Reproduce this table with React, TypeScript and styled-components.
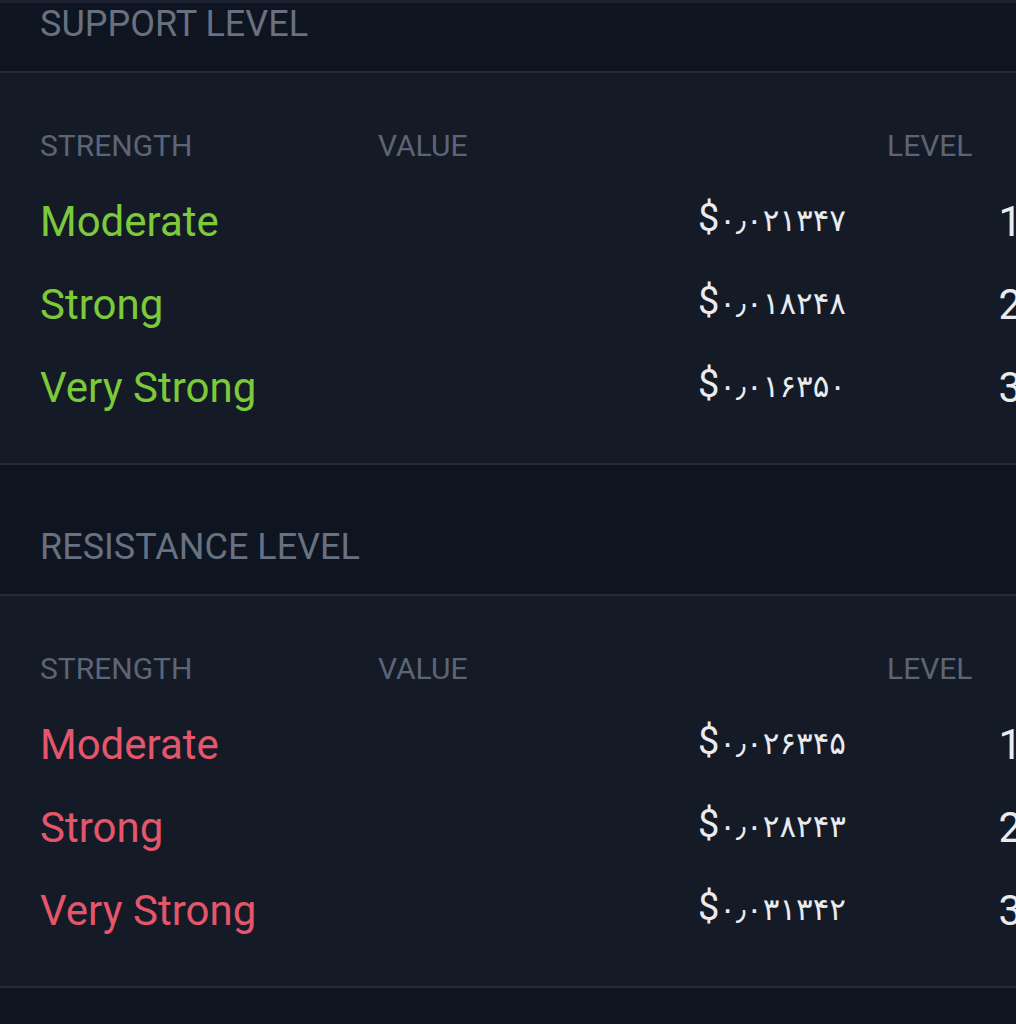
import React from 'react';
import styled, { createGlobalStyle } from 'styled-components';

const GlobalStyle = createGlobalStyle`
  html, body {
    margin: 0;
    padding: 0;
    background: #0f1520;
    overflow: hidden;
  }
  body {
    font-family: Roboto, "Noto Sans", "DejaVu Sans", sans-serif;
  }
`;

const Page = styled.div`
  width: 1016px;
  min-height: 1024px;
  overflow: hidden;
  background: #0f1520;
  border-top: 3px solid #1b2130;
`;

const SectionHeader = styled.div<{ $top: number }>`
  width: 1040px;
  box-sizing: border-box;
  padding: ${(p) => p.$top}px 0 26px 40px;
  background: #0f1520;
  border-bottom: 2px solid #222a3d;
`;

const Title = styled.h2`
  margin: 0;
  font-size: 36px;
  line-height: 42px;
  font-weight: 400;
  color: #687181;
`;

const Table = styled.div`
  width: 1040px;
  box-sizing: border-box;
  padding: 55px 0 34px 40px;
  background: #151b26;
  border-bottom: 2px solid #222a3d;
`;

const Row = styled.div<{ $head?: boolean }>`
  display: grid;
  grid-template-columns: 297px 468px 135px;
  column-gap: 41px;
  align-items: center;
  height: ${(p) => (p.$head ? 36 : 83)}px;
  margin-bottom: ${(p) => (p.$head ? 16 : 0)}px;
`;

const HeadCell = styled.div`
  font-size: 30px;
  line-height: 36px;
  color: #5c6575;
`;

const Strength = styled.div<{ $tone: 'up' | 'down' }>`
  font-size: 42px;
  line-height: 50px;
  color: ${(p) => (p.$tone === 'up' ? '#7cc93a' : '#e3566b')};
`;

const Value = styled.div`
  justify-self: end;
  font-family: "DejaVu Sans", sans-serif;
  font-size: 31px;
  line-height: 50px;
  color: #e9ebef;
  margin-top: -6px;
  white-space: nowrap;
`;

const Dollar = styled.span`
  font-family: Roboto, sans-serif;
  font-size: 38px;
`;

const Level = styled.div`
  justify-self: end;
  font-size: 42px;
  line-height: 50px;
  color: #e9ebef;
`;

type Entry = { strength: string; value: string; level: number };

const support: Entry[] = [
  { strength: 'Moderate', value: '۰٫۰۲۱۳۴۷', level: 1 },
  { strength: 'Strong', value: '۰٫۰۱۸۲۴۸', level: 2 },
  { strength: 'Very Strong', value: '۰٫۰۱۶۳۵۰', level: 3 },
];

const resistance: Entry[] = [
  { strength: 'Moderate', value: '۰٫۰۲۶۳۴۵', level: 1 },
  { strength: 'Strong', value: '۰٫۰۲۸۲۴۳', level: 2 },
  { strength: 'Very Strong', value: '۰٫۰۳۱۳۴۲', level: 3 },
];

function LevelTable({ rows, tone }: { rows: Entry[]; tone: 'up' | 'down' }) {
  return (
    <Table>
      <Row $head>
        <HeadCell>STRENGTH</HeadCell>
        <HeadCell>VALUE</HeadCell>
        <HeadCell>LEVEL</HeadCell>
      </Row>
      {rows.map((r) => (
        <Row key={r.level}>
          <Strength $tone={tone}>{r.strength}</Strength>
          <Value>
            <Dollar>$</Dollar>
            {r.value}
          </Value>
          <Level>{r.level}</Level>
        </Row>
      ))}
    </Table>
  );
}

export default function App() {
  return (
    <Page>
      <GlobalStyle />
      <SectionHeader $top={0}>
        <Title>SUPPORT LEVEL</Title>
      </SectionHeader>
      <LevelTable rows={support} tone="up" />
      <SectionHeader $top={61}>
        <Title>RESISTANCE LEVEL</Title>
      </SectionHeader>
      <LevelTable rows={resistance} tone="down" />
    </Page>
  );
}
